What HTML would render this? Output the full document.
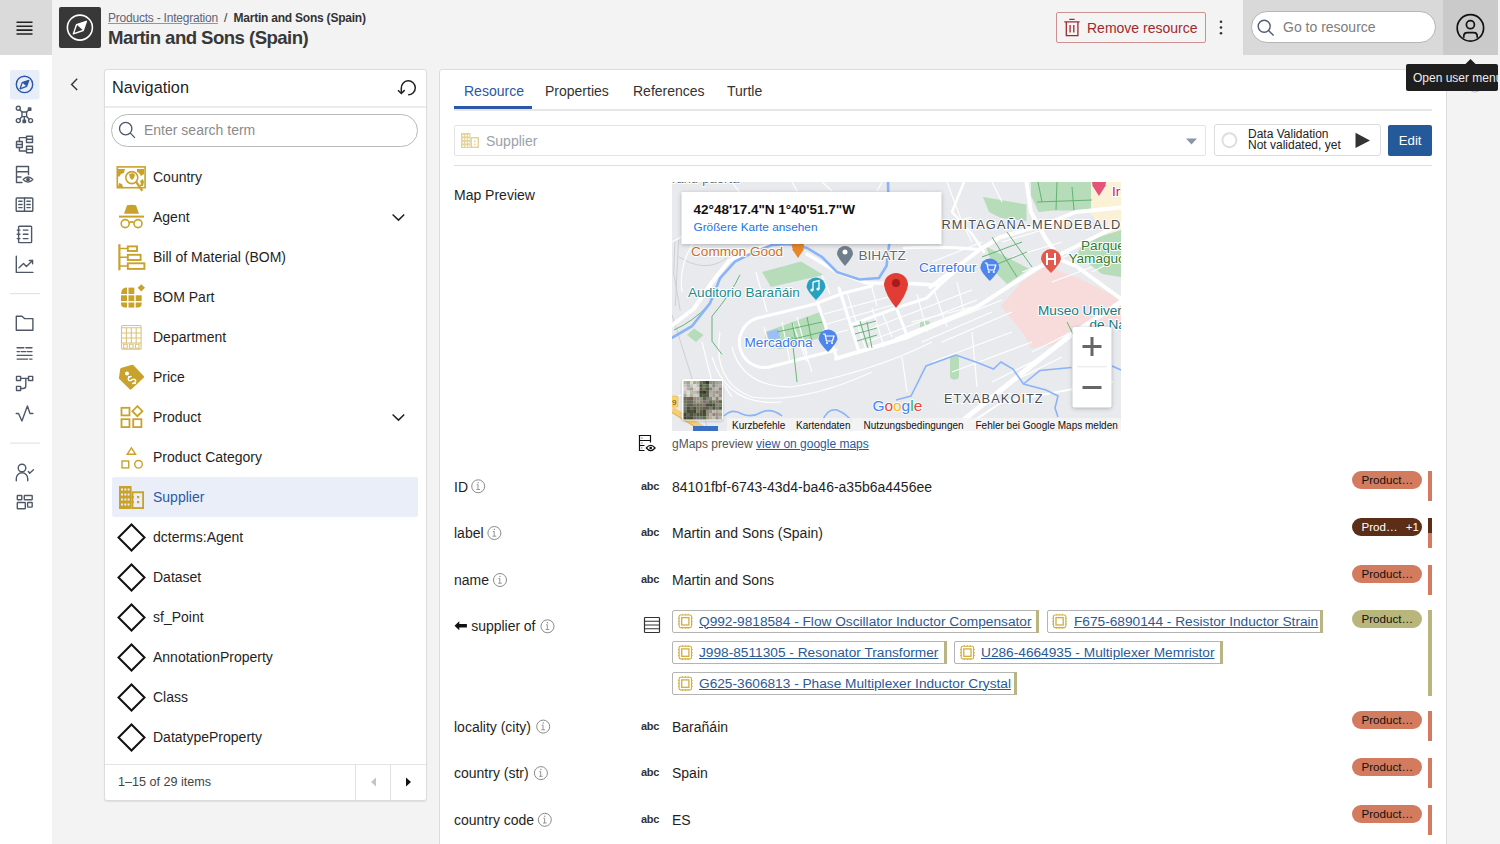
<!DOCTYPE html>
<html><head><meta charset="utf-8">
<style>
*{box-sizing:border-box;margin:0;padding:0}
html,body{width:1500px;height:844px;overflow:hidden;background:#f3f3f3;font-family:"Liberation Sans",sans-serif;color:#1f1f1f}
.a{position:absolute;white-space:nowrap}
svg{position:absolute;overflow:visible}
#side{left:0;top:0;width:52px;height:844px;background:#fff}
#ham{left:0;top:0;width:52px;height:55px;background:#dadada}
.sep{position:absolute;left:10px;width:30px;height:1px;background:#dfe2e6}
#logo{left:59px;top:7px;width:42px;height:41px;background:#383838;border-radius:2px}
.crumb{left:108px;top:10.5px;font-size:12px;color:#333;font-weight:bold;letter-spacing:-0.22px}
.crumb a{color:#5b6678;font-weight:normal;text-decoration:underline;text-decoration-color:#8d96a4}
.title{left:108px;top:26.5px;font-size:18.6px;font-weight:bold;color:#383838;letter-spacing:-0.55px}
#remove{left:1056px;top:12px;width:150px;height:31px;border:1px solid #cf9092;border-radius:2px;background:#f4f4f4}
#remove span{position:absolute;left:30px;top:7px;font-size:14px;color:#a3282c}
#srchbar{left:1243px;top:0;width:255px;height:55px;background:#d9d9d9}
#userbtn{left:1443px;top:0;width:55px;height:55px;background:#cacaca}
#gosearch{left:1251px;top:11px;width:185px;height:32px;border-radius:16px;background:#fff;border:1px solid #b5b5b5}
#navcard{left:104px;top:69px;width:323px;height:732px;background:#fff;border:1px solid #dcdcdc;border-radius:3px;box-shadow:0 1px 1px rgba(0,0,0,.08)}
#maincard{left:439px;top:69px;width:1008px;height:800px;background:#fff;border:1px solid #dcdcdc;border-radius:3px}
.nt{position:absolute;left:153px;font-size:14px;color:#1f1f1f}
.tip{left:1406px;top:64px;width:92px;height:27px;overflow:hidden;background:#1e1e1e;border-radius:2px;color:#ececec;font-size:12px}
.lbl{position:absolute;left:454px;font-size:14px;color:#1f1f1f}
.val{position:absolute;left:672px;font-size:14px;color:#1f1f1f}
.abc{position:absolute;left:641px;font-size:11px;font-weight:bold;color:#333;letter-spacing:-0.3px}
.pill{position:absolute;left:1352px;width:70px;height:18px;border-radius:9px;background:#d27b5f;font-size:11.6px;color:#111;padding-left:9.5px;line-height:18px}
.bar{position:absolute;left:1428.3px;width:3.4px;background:#d27b5f}
.chip{position:absolute;height:23px;border:1px solid #b4b4b4;border-radius:2px;background:#fff}
.chip::after{content:"";position:absolute;right:-1px;top:-1px;bottom:-1px;width:3px;background:#b9b583}
.chip span{position:absolute;left:26px;top:2.5px;font-size:13.7px;color:#2b5a97;text-decoration:underline}
.tab{position:absolute;top:83px;font-size:14px;color:#333}
</style></head><body>
<div id="side" class="a"></div>
<div id="ham" class="a"></div>
<div id="logo" class="a"></div>
<div class="a crumb"><a>Products - Integration</a><span style="font-weight:normal">&nbsp; / &nbsp;</span>Martin and Sons (Spain)</div>
<div class="a title">Martin and Sons (Spain)</div>
<div id="remove" class="a"><span>Remove resource</span></div>
<div id="srchbar" class="a"></div>
<div id="userbtn" class="a"></div>
<div id="gosearch" class="a"></div>
<div class="a" style="left:1283px;top:19px;font-size:14px;color:#7d7d7d">Go to resource</div>


<svg width="1500" height="844" style="left:0;top:0" viewBox="0 0 1500 844">
<!-- hamburger -->
<g stroke="#222" stroke-width="1.6"><path d="M16.5 22.3h16M16.5 26.2h16M16.5 30.1h16M16.5 34h16"/></g>
<!-- active nav bg -->
<rect x="10" y="70" width="29.5" height="29.5" rx="2" fill="#e8eef9"/>
<g fill="none" stroke="#2c56a8" stroke-width="1.4"><circle cx="24.5" cy="84.4" r="8.2"/></g>
<path d="M28.8 80.3 L22.2 82.6 L20.1 88.8 L26.6 86.4Z" fill="none" stroke="#2c56a8" stroke-width="1.3" stroke-linejoin="round"/>
<path d="M28.8 80.3 L22.2 82.6 L26.6 86.4Z" fill="#2c56a8"/>
<g fill="none" stroke="#4e5868" stroke-width="1.4" stroke-linecap="round" stroke-linejoin="round">
<!-- network -->
<rect x="22" y="112" width="4.6" height="4.6"/>
<circle cx="18.3" cy="108.3" r="2"/><circle cx="18.3" cy="120.6" r="2"/><circle cx="30.6" cy="120.6" r="2"/>
<path d="M19.8 109.8L22 112M26.6 112L28.6 110M22 116.6L19.8 119M26.6 116.6L29 119M24.3 116.6V120"/><rect x="28.4" y="108" width="2.4" height="2.4" fill="#4e5868"/><rect x="23.1" y="120.1" width="2.4" height="2.4" fill="#4e5868"/>
<!-- hierarchy -->
<rect x="16.5" y="141.5" width="5.8" height="6"/><rect x="26.5" y="136.2" width="6" height="6.3"/><rect x="26.5" y="146.3" width="6" height="6.4"/>
<path d="M19.4 141.5V137.6H26.5M19.4 147.5V151H26.5M16.5 144.5H22.3M26.5 139.3H32.5M26.5 149.4H32.5"/>
<!-- server eye -->
<path d="M22 182.5H16.5V166.5H28.5V174.5M16.5 171.8H28.5M16.5 177H21"/>
<path d="M23.2 179.6Q28 174.5 32.8 179.6Q28 184.7 23.2 179.6Z"/><circle cx="28" cy="179.6" r="1.2" fill="#4e5868"/>
<!-- book -->
<rect x="16.2" y="198" width="16.6" height="13.2" rx="0.8"/><path d="M24.5 198V211.2M18.8 201.3h3.3M18.8 204.5h3.3M18.8 207.6h3.3M26.9 201.3h3.3M26.9 204.5h3.3M26.9 207.6h3.3"/>
<!-- notebook -->
<rect x="18.6" y="226.3" width="13" height="16.3" rx="0.8"/><path d="M17.2 230.1h2.8M17.2 234.3h2.8M17.2 238.6h2.8M23.3 230.1h4.7M23.3 234.3h4.7M23.3 238.6h4.7"/>
<!-- chart -->
<path d="M16.3 256.2V272.4H32.9M19 267.7L23.5 263.5L26.4 266.6L32.6 260.5M29.3 260.5H32.6V263.8"/>
<!-- folder -->
<path d="M16.3 316.3H22L24.5 318.6H32.9V330.2H16.3Z"/>
<!-- lines -->
<path d="M17.1 347.8h6.7M25.9 347.8h6.1M17.1 351.6h2.4M21.2 351.6h4.6M27.4 351.6h4.6M17.1 355.4h14.9M17.1 359.1h10.6M29.7 359.1h2.3"/>
<!-- flow -->
<rect x="16.5" y="376.4" width="4.1" height="4.1"/><rect x="28.5" y="376.4" width="4.2" height="4.1"/><rect x="16.5" y="386.4" width="4.1" height="4.1"/>
<path d="M20.6 378.4H28.5M25.8 378.4V386Q25.8 388.5 23 388.5H20.6"/>
<!-- pulse -->
<path d="M16.2 413.5H18.5L21.9 421L27.4 406L30 413.5H32.9"/>
<!-- user check -->
<circle cx="22" cy="468" r="3.8"/><path d="M16.3 480.8V478.5A5.7 5.7 0 0 1 27.7 478.5V480.8M28.3 471.5L29.7 473.2L33.4 469.8"/>
<!-- grid -->
<rect x="17.3" y="495.5" width="4.5" height="4.3" rx="0.6"/><rect x="24.3" y="495.5" width="7.9" height="4.3" rx="0.6"/><rect x="17.3" y="502.5" width="8" height="6.3" rx="0.6"/><rect x="27.6" y="502.5" width="4.6" height="4.6" rx="0.6"/>
</g>
<rect x="10" y="293" width="30" height="1.2" fill="#e2e4e8"/>
<rect x="10" y="442.5" width="30" height="1.2" fill="#e2e4e8"/>
<!-- logo compass -->
<circle cx="79.9" cy="27.6" r="12.5" fill="none" stroke="#fff" stroke-width="1.6"/>
<path d="M86.4 21.3L76.6 24.6L73.3 33.9L83.2 30.5Z" fill="none" stroke="#fff" stroke-width="1.4" stroke-linejoin="round"/>
<path d="M86.4 21.3L76.6 24.6L83.2 30.5Z" fill="#fff"/>
</svg>

<!-- NAV CARD -->
<div id="navcard" class="a"></div>
<div class="a" style="left:112px;top:78px;font-size:16.3px;color:#1f1f1f">Navigation</div>
<div class="a" style="left:105px;top:106px;width:321px;height:2px;background:#ebebeb"></div>
<div class="a" style="left:111px;top:114px;width:307px;height:33px;border:1px solid #b9b9b9;border-radius:17px"></div>
<div class="a" style="left:144px;top:122px;font-size:14px;color:#8b8b8b">Enter search term</div>
<div class="a" style="left:112px;top:477px;width:306px;height:40px;background:#e9eef8;border-radius:2px"></div>
<div class="nt" style="top:169px">Country</div>
<div class="nt" style="top:209px">Agent</div>
<div class="nt" style="top:249px">Bill of Material (BOM)</div>
<div class="nt" style="top:289px">BOM Part</div>
<div class="nt" style="top:329px">Department</div>
<div class="nt" style="top:369px">Price</div>
<div class="nt" style="top:409px">Product</div>
<div class="nt" style="top:449px">Product Category</div>
<div class="nt" style="top:489px;color:#2c59a8">Supplier</div>
<div class="nt" style="top:529px">dcterms:Agent</div>
<div class="nt" style="top:569px">Dataset</div>
<div class="nt" style="top:609px">sf_Point</div>
<div class="nt" style="top:649px">AnnotationProperty</div>
<div class="nt" style="top:689px">Class</div>
<div class="nt" style="top:729px">DatatypeProperty</div>
<div class="a" style="left:105px;top:764px;width:321px;height:1px;background:#e3e3e3"></div>
<div class="a" style="left:355px;top:765px;width:1px;height:35px;background:#e0e0e0"></div>
<div class="a" style="left:390px;top:765px;width:1px;height:35px;background:#e0e0e0"></div>
<div class="a" style="left:118px;top:774.5px;font-size:12.6px;color:#444">1–15 of 29 items</div>


<svg width="1500" height="844" style="left:0;top:0" viewBox="0 0 1500 844">
<!-- back chevron -->
<path d="M77.2 78.7L71.6 84.4L77.2 89.9" fill="none" stroke="#333" stroke-width="1.4"/>
<!-- header trash -->
<g fill="none" stroke="#a3282c" stroke-width="1.3"><path d="M1069.3 19.3h5.3M1064.3 21.8h15.3M1066.3 21.8V35.7H1077.9V21.8M1070.1 25V32.4M1073.8 25V32.4"/></g>
<g fill="#333"><circle cx="1221" cy="21.7" r="1.3"/><circle cx="1221" cy="27.5" r="1.3"/><circle cx="1221" cy="33.3" r="1.3"/></g>
<!-- go search icon -->
<g fill="none" stroke="#4d5c78" stroke-width="1.4"><circle cx="1264.2" cy="26.2" r="6"/><path d="M1268.6 30.6L1273.6 35.5"/></g>
<!-- user -->
<g fill="none" stroke="#111" stroke-width="1.7"><circle cx="1470.4" cy="27.9" r="13.2"/><circle cx="1470.4" cy="24.7" r="4"/><path d="M1463.8 37.8V36.3Q1463.8 32.7 1467.4 32.7H1473.6Q1477.2 32.7 1477.2 36.3V37.8"/></g>
<!-- tooltip arrow + hidden circle -->
<path d="M1465 64.5L1470.5 59L1476 64.5Z" fill="#1e1e1e"/>
<circle cx="1475" cy="85" r="7" fill="none" stroke="#b8c2d2" stroke-width="1.2"/>

<!-- nav refresh -->
<g fill="none" stroke="#222" stroke-width="1.5"><path d="M408.2 94.8A7 7 0 1 0 401.3 88.3V93.2"/><path d="M398 90.2L401.35 93.5L404.7 90.1"/></g>
<!-- nav search -->
<g fill="none" stroke="#4a5568" stroke-width="1.3"><circle cx="125.7" cy="128.6" r="6.2"/><path d="M130.4 133.1L134.9 137.9"/></g>
<!-- chevrons -->
<g fill="none" stroke="#222" stroke-width="1.5"><path d="M392.6 214.5L398.5 220.1L404.2 214.5M392.6 414.5L398.5 420.1L404.2 414.5"/></g>
<!-- pagination -->
<path d="M376 777.5V786.5L371 782Z" fill="#c4c4c4"/>
<path d="M406 777.5V786.5L411 782Z" fill="#111"/>

<g fill="#c9a22c" stroke="none">
<!-- agent hat -->
<path d="M127 205.3Q131.5 204 136 205.3L139 213.8H124Z"/>
<rect x="119" y="215.6" width="25" height="2"/>
</g>
<g fill="none" stroke="#c9a22c" stroke-width="1.6">
<!-- country -->
<rect x="117.3" y="166.9" width="27.8" height="20.8"/>
<circle cx="131.8" cy="177.6" r="6"/><path d="M136.2 182L142.3 190.8" stroke-width="2.2"/>
<!-- agent glasses -->
<circle cx="125.2" cy="223.6" r="4"/><circle cx="138" cy="223.6" r="4"/><path d="M129.2 222.6Q131.6 221.2 134 222.6"/>
<!-- BOM -->
<path d="M119.4 244.2V270.3" stroke-width="2.2"/>
<path d="M119.4 248.5H127.8M119.4 257.2H127.8M119.4 266H127.8"/>
<rect x="127.8" y="246.4" width="9.2" height="4.6" stroke-width="1.9"/>
<rect x="127.8" y="254.8" width="12.8" height="5.2" stroke-width="1.9"/>
<rect x="127.8" y="263.3" width="16.6" height="5.6" stroke-width="1.9"/>
<!-- product -->
<rect x="121.5" y="407.8" width="8" height="7.6" stroke-width="1.8"/>
<path d="M137.4 406.2L142.4 411.2L137.4 416.2L132.4 411.2Z" stroke-width="1.8"/>
<rect x="121.5" y="419.2" width="8" height="7.9" stroke-width="1.8"/>
<rect x="133.2" y="419.2" width="8.2" height="7.9" stroke-width="1.8"/>
<!-- product category -->
<path d="M131.4 447.8L135.6 454.3H127.2Z" stroke-width="1.4"/>
<rect x="122" y="461" width="6.7" height="6.9" stroke-width="1.4"/>
<circle cx="138.5" cy="464.3" r="3.8" stroke-width="1.4"/>
</g>
<!-- country blobs -->
<g fill="#c9a22c"><path d="M118 169h7l-1 4-3 1-2 3-1-1zM137 169h7v5l-3 2-2-3-2-1zM129 174l4-1 2 2-1 3-2 2-2-2zM140 181l3-2 1 3-1 4h-4l2-2zM119 183l3 1 1 3h-5z"/></g>
<!-- BOM part -->
<g fill="#c9a22c">
<path d="M121 294.6Q121 287.6 126.5 287.6H127V294H121Z"/><rect x="128.5" y="287.6" width="5.8" height="6.4"/>
<rect x="121" y="295.3" width="6" height="5.8"/><rect x="128.5" y="295.3" width="5.8" height="5.8"/><rect x="135.7" y="295.3" width="6" height="5.8"/>
<path d="M121 302.5H127V307.6H125Q121 307.6 121 303.6Z"/><rect x="128.5" y="302.5" width="5.8" height="5.1"/><path d="M135.7 302.5H141.7V303.6Q141.7 307.6 137.7 307.6H135.7Z"/>
<path d="M141.3 284.2L145 287.8L141.3 291.5L137.6 287.8Z"/>
</g>
<!-- department -->
<g fill="none" stroke="#dcc47c" stroke-width="1.1">
<rect x="121.5" y="325.5" width="19.6" height="23.6" rx="1"/>
<path d="M121.5 327.8H141.1M121.5 333H141.1M121.5 338H141.1M121.5 343H141.1M126.4 327.8V343M131.3 327.8V343M136.2 327.8V343"/>
<rect x="123.6" y="344.2" width="3.6" height="4"/><rect x="129.5" y="344.2" width="3.6" height="4"/><rect x="135.4" y="344.2" width="3.6" height="4"/>
</g>
<!-- price -->
<path d="M121.5 369.3L132.3 366L142.8 376.8L130.6 388.4L120.2 378Z" fill="#c9a22c" stroke="#c9a22c" stroke-width="2.6" stroke-linejoin="round"/>
<circle cx="127" cy="373.4" r="2" fill="#fff"/>
<g transform="rotate(-45 132 380)"><path d="M134.2 377.2Q133 376 131.6 376Q129.6 376 129.6 377.8Q129.6 379.3 132 379.8Q134.4 380.3 134.4 382Q134.4 383.8 132.2 383.8Q130.6 383.8 129.6 382.6M132 374.8V376M132 383.8V385.2" fill="none" stroke="#fff" stroke-width="1.4"/></g>
<!-- supplier building -->
<g fill="#c9a22c"><rect x="119" y="486" width="12.6" height="23"/><rect x="131.6" y="491.3" width="12.4" height="17.7"/></g>
<g fill="#e9eef8">
<rect x="121" y="488.5" width="2" height="2"/><rect x="124.3" y="488.5" width="2" height="2"/><rect x="127.6" y="488.5" width="2" height="2"/>
<rect x="121" y="493.5" width="2" height="2"/><rect x="124.3" y="493.5" width="2" height="2"/><rect x="127.6" y="493.5" width="2" height="2"/>
<rect x="121" y="498.5" width="2" height="2"/><rect x="124.3" y="498.5" width="2" height="2"/><rect x="127.6" y="498.5" width="2" height="2"/>
<rect x="121" y="503.5" width="2" height="2"/><rect x="124.3" y="503.5" width="2" height="2"/><rect x="127.6" y="503.5" width="2" height="2"/>
<rect x="133.4" y="493.2" width="8.8" height="13.9"/>
</g>
<g fill="#c9a22c"><rect x="137" y="496" width="2.2" height="2.2"/><rect x="137" y="501" width="2.2" height="2.2"/><rect x="131.6" y="496" width="2.2" height="2.2"/><rect x="131.6" y="501" width="2.2" height="2.2"/></g>
<!-- diamonds -->
<g fill="none" stroke="#111" stroke-width="2">
<path d="M131.5 524.5L144.5 537.5L131.5 550.5L118.5 537.5Z"/>
<path d="M131.5 564.5L144.5 577.5L131.5 590.5L118.5 577.5Z"/>
<path d="M131.5 604.5L144.5 617.5L131.5 630.5L118.5 617.5Z"/>
<path d="M131.5 644.5L144.5 657.5L131.5 670.5L118.5 657.5Z"/>
<path d="M131.5 684.5L144.5 697.5L131.5 710.5L118.5 697.5Z"/>
<path d="M131.5 724.5L144.5 737.5L131.5 750.5L118.5 737.5Z"/>
</g>
</svg>

<!-- MAIN CARD -->
<div id="maincard" class="a"></div>
<div class="tab" style="left:464px;color:#2c56a8">Resource</div>
<div class="tab" style="left:545px">Properties</div>
<div class="tab" style="left:633px">References</div>
<div class="tab" style="left:727px">Turtle</div>
<div class="a" style="left:454px;top:109px;width:978px;height:2px;background:#e6e6e6"></div>
<div class="a" style="left:454px;top:106px;width:78px;height:3px;background:#2c56a8"></div>

<div class="a" style="left:454px;top:125px;width:752px;height:31px;border:1px solid #e4e4e4;border-radius:2px"></div>
<div class="a" style="left:486px;top:133px;font-size:14px;color:#9aa1ab">Supplier</div>
<div class="a" style="left:1214px;top:124px;width:167px;height:32px;border:1px solid #dcdcdc;border-radius:3px"></div>
<div class="a" style="left:1248px;top:128.8px;font-size:12px;line-height:11.6px;color:#222">Data Validation<br>Not validated, yet</div>
<div class="a" style="left:1388px;top:125px;width:44px;height:31px;background:#245a99;border-radius:2px"></div>
<div class="a" style="left:1398.8px;top:132.8px;font-size:13.2px;color:#fff">Edit</div>
<div class="a" style="left:454px;top:165px;width:978px;height:1px;background:#dedede"></div>

<div class="lbl" style="top:187px">Map Preview</div>
<div id="map" class="a" style="left:672px;top:182px;width:449px;height:249px;background:#e8eaed;overflow:hidden">
<svg width="449" height="249" viewBox="0 0 449 249" style="left:0;top:0;font-family:'Liberation Sans',sans-serif">
<!-- areas -->
<path d="M416 0H449V55L430 48L418 30Z" fill="#fbf1d7"/>
<path d="M374 84L408 97L449 117V124H401V145L381.5 163L359 166L353 154L329 124L350 100Z" fill="#f7dcdb"/>
<path d="M401 124H449V150L430 140L401 145Z" fill="#f7dcdb"/>
<path d="M311 15L354.5 22.5L354.5 39L329 36L317 30Z" fill="#b6dcb9"/>
<path d="M359 0H419V28.5L381.5 28.5L366.5 30L359 13.5Z" fill="#b6dcb9"/>
<path d="M412 60L449 48V95L430 92L405 72Z" fill="#b6dcb9"/>
<path d="M314 64.5L357.5 87L335 102L323 90Z" fill="#b6dcb9"/>
<path d="M90 90L129 79.5L151.5 93L99 105Z" fill="#b6dcb9"/>
<path d="M93.3 150L148 130L153.3 144.7L145.3 156.7L108 167.3L93.3 162Z" fill="#b6dcb9"/><path d="M95 150L106 147L108 156L97 158Z" fill="#9cbff7"/>
<path d="M15 153L22 146.5L31.5 153L24 160Z" fill="#b6dcb9"/>
<rect x="248" y="139" width="9.5" height="7.5" fill="#b6dcb9"/>
<rect x="278" y="173.5" width="9" height="24" rx="4" fill="#b6dcb9"/>
<!-- rail -->
<g fill="none" stroke="#c6c9cd" stroke-width="0.8"><path d="M3 58L1.7 91L8.3 129M6.6 58L3.3 124M0 132.6L36.5 249M6.6 74.6Q33 92 55 76"/></g>
<!-- minor roads -->
<g fill="none" stroke="#fff" stroke-width="1.2" opacity="0.95">
<path d="M0 60Q40 40 70 10M10 110Q5 70 40 40M60 0L75 20M120 0L125 9M150 0L160 9M210 0L205 9"/>
<path d="M84 90L95 130M150 93L158 112"/>
<path d="M48 150Q40 200 80 215Q130 222 200 190"/>
<path d="M181 130L195 170M200 126L212 165M120 140L135 180M130 160L140 190"/>
<path d="M230 20L260 10M240 50L300 35M260 80L310 60M275 0L290 40L300 60M320 0L330 20"/>
<path d="M330 60L390 42M340 75L390 60M350 90L400 72M380 100L420 85M420 90L449 75"/>
<path d="M240 140L300 125M250 160L320 130M260 180L340 150M280 190L360 160M320 200L380 170M230 175L235 210M300 150L305 205"/>
<path d="M360 170L400 150M340 200L390 175"/>
<path d="M0 215Q30 210 50 200L60 215M30 160L40 200"/>
</g>
<!-- major roads -->
<g fill="none" stroke="#fff" stroke-width="4" stroke-linecap="round" stroke-linejoin="round">
<path d="M0 143.5L21.6 127L40.5 99.5L57 79L74 70.3L99.5 62L128 60" stroke-width="4"/>
<path d="M232 66Q270 64 308 67.5" stroke-width="3"/>
<path d="M292 0L280 30L300 52L312 70" stroke-width="2.5"/>
<path d="M135 72L165 90L195 101L237 101.5L266.4 102.9" stroke-width="3.5"/>
<path d="M258.5 105L308 67.5L327.5 55.5L374 42L404 30L449 25.5"/>
<path d="M164 176.7L235.6 155L305 125L359 90L389 72L419 57L449 42"/>
<path d="M178.8 142.8L224 126L254.7 116.1L267.9 102.9L291.3 82.4" stroke-width="3"/>
<path d="M224 125L235.6 155" stroke-width="3"/>
<path d="M354.5 0L359 30L374 57L389 78L404 84L449 117"/>
<path d="M145.5 121L165 176.5M167 106L187 170" stroke-width="3"/>
<path d="M84 136.5L108 130.7L142.7 122L171.6 111L200 104" stroke-width="3"/>
<path d="M84 136.5A24.5 24.5 0 0 0 101.3 184L164 168" stroke-width="3"/>
<path d="M291.5 238L359 184L399.5 152.5L449 120" stroke-width="5"/>
<path d="M224 157L306.5 124" stroke-width="3"/>
<path d="M300 240L330 220L440 200" stroke-width="2"/>
</g>
<g fill="none" stroke="#fff" stroke-width="1.1">
<path d="M152 132L228 112M155 142L228 121M160 152L176 148M190 150L300 108M195 160L305 118M250 150L330 118M270 160L340 130"/>
<path d="M92 145L96 160M110 140L118 180M125 135L135 172M175 110L181 130M200 106L205 124M210 130L220 155M245 112L255 150M262 108L275 145M285 100L292 130"/>
<path d="M60 165Q70 205 120 205Q200 190 260 160M40 175Q55 225 110 220"/>
</g>
<!-- green paths -->
<g fill="none" stroke="#5aae6a" stroke-width="0.9">
<path d="M181.5 145L204 139M183 152L205 146M185 159L205 153M188 139L196 166M195 140L200 166"/>
<path d="M320 55L345 95M335 50L360 85M310 75L350 60M318 85L355 70"/>
<path d="M68 92.8Q60 110 40 134.3L40 159.2L50 172.4M120 155L125 200M70 10Q60 30 60 60M2 148Q20 140 37 123"/>
<path d="M105 150L150 140M110 160L150 150M120 140L125 165M135 135L140 160"/>
<path d="M366 0L370 20M385 0L384 28M400 5L402 28M365 20L420 18"/>
<path d="M395 140L405 160"/>
</g>
<!-- river -->
<g fill="none" stroke="#8ab4f8" stroke-width="2.6" stroke-linecap="round">
<path d="M0 155.8L19.9 144.2L38.1 121L48.1 96.1L63 79.6L82.9 69.6L100 63L117 62L135 66L150 75L165 90L187.5 97.5L207 96L214.5 84L216 72L217.5 60L216 0"/>
</g>
<g fill="none" stroke="#8ab4f8" stroke-width="1.6">
<path d="M224 218L239 214L254 184L284 173L306.5 181L321.5 187L329 180L341 187L351.5 202L374 208L386 214L383 226L386 235"/>
<path d="M351.5 202L368 188.5L399.5 185.5M440 184L449 188"/>
<path d="M52 234Q60 226 70 232Q80 236 90 230Q100 226 110 234M150 240Q155 226 165 228Q175 232 180 240"/>
</g>
<!-- labels -->
<g font-size="12.8" fill="#4a4d52" stroke="#fff" stroke-width="2" paint-order="stroke">
<text x="269.5" y="47.3" letter-spacing="1.1">RMITAGAÑA-MENDEBALD</text>
<text x="272" y="220.8" letter-spacing="1.05">ETXABAKOITZ</text>
<text x="0" y="1.2" letter-spacing="0.2" fill="#5f6b76">ranu paorta</text>
</g>
<g font-size="13.6" stroke="#fff" stroke-width="2" paint-order="stroke">
<text x="19" y="73.5" fill="#c96f26">Common Good</text>
<text x="186.5" y="78" fill="#5f6b76">BIHATZ</text>
<text x="16" y="115" fill="#1c8a8e">Auditorio Barañáin</text>
<text x="72.5" y="165.3" fill="#3b78e7">Mercadona</text>
<text x="247" y="90" fill="#3b78e7">Carrefour</text>
<text x="409" y="67.5" fill="#2e7d32">Parque</text>
<text x="396.5" y="81" fill="#2e7d32">Yamaguchi</text>
<text x="366" y="133" fill="#157a82">Museo Universidad</text>
<text x="417.5" y="146.5" fill="#157a82">de Navarra</text>
<text x="440" y="13.5" fill="#d0205e">Iru</text>
</g>
<!-- markers -->
<path d="M126 76L120 67H132Z" fill="#e8862a"/><circle cx="126" cy="64" r="6" fill="#e8862a"/>
<path d="M173 84Q166 76 165 72A8 8 0 1 1 181 72Q180 76 173 84Z" fill="#6f7e8c"/><circle cx="173" cy="70" r="2.5" fill="#fff"/>
<path d="M144 118Q136 110 134.5 105A9.5 9.5 0 1 1 153.5 105Q152 110 144 118Z" fill="#26a2c0"/>
<path d="M141 100L147 98.5V107M141 100V108" stroke="#fff" stroke-width="1.3" fill="none"/><circle cx="140" cy="108" r="1.6" fill="#fff"/><circle cx="146" cy="107" r="1.6" fill="#fff"/>
<path d="M156 170Q148 162 146.5 157A9.5 9.5 0 1 1 165.5 157Q164 162 156 170Z" fill="#4f86ec"/>
<path d="M151 152H153L154.5 159H160.5L162 154H153.5" stroke="#fff" stroke-width="1.2" fill="none"/><circle cx="155" cy="161" r="1" fill="#fff"/><circle cx="160" cy="161" r="1" fill="#fff"/>
<path d="M317.8 99Q309.8 91 308.3 86A9.5 9.5 0 1 1 327.3 86Q325.8 91 317.8 99Z" fill="#4f86ec"/>
<path d="M312.8 81H314.8L316.3 88H322.3L323.8 83H315.3" stroke="#fff" stroke-width="1.2" fill="none"/><circle cx="316.8" cy="90" r="1" fill="#fff"/><circle cx="321.8" cy="90" r="1" fill="#fff"/>
<path d="M379 91Q370 82 369 77A10 10 0 1 1 389 77Q388 82 379 91Z" fill="#e25a4c"/>
<path d="M375 71V83M383 71V83M375 77H383" stroke="#fff" stroke-width="2" fill="none"/>
<path d="M427 14L420 3H434Z" fill="#e4547a"/><circle cx="427" cy="0" r="7" fill="#e4547a"/>
<path d="M224 126Q213.5 113 212 103A12 12 0 1 1 236 103Q234.5 113 224 126Z" fill="#e23d35"/><circle cx="224" cy="101" r="4" fill="#a61b1b"/>
<!-- road signs -->
<rect x="-2" y="214" width="8" height="11" rx="1" fill="#f9d46b" stroke="#e0b14a" stroke-width="0.6"/><text x="0" y="223" font-size="8" fill="#5a4a10">9</text>
<path d="M0 227.5L34.5 249" stroke="#f5cd76" stroke-width="6"/>
<path d="M0 227.5L34.5 249" stroke="#e2a952" stroke-width="1" transform="translate(0,3)"/>
<rect x="21" y="244" width="25" height="8" fill="#3b6fc2"/>
<!-- satellite -->
<rect x="9.8" y="197" width="41.3" height="41.5" rx="3" fill="#fff" style="filter:drop-shadow(0 1px 1px rgba(0,0,0,.2))"/>
<svg x="11.5" y="199" width="38" height="37.5" style="position:static"><g transform="translate(-11.5,-199)"><g style="filter:blur(0.5px)"><rect x="11.5" y="199.0" width="3.3" height="3.3" fill="#b0b4a1"/><rect x="14.7" y="199.0" width="3.3" height="3.3" fill="#9fa391"/><rect x="17.9" y="199.0" width="3.3" height="3.3" fill="#e2d4c7"/><rect x="21.1" y="199.0" width="3.3" height="3.3" fill="#aaa693"/><rect x="24.3" y="199.0" width="3.3" height="3.3" fill="#a9b09c"/><rect x="27.5" y="199.0" width="3.3" height="3.3" fill="#616d4f"/><rect x="30.7" y="199.0" width="3.3" height="3.3" fill="#5a5745"/><rect x="33.9" y="199.0" width="3.3" height="3.3" fill="#303d29"/><rect x="37.1" y="199.0" width="3.3" height="3.3" fill="#8b8c7e"/><rect x="40.3" y="199.0" width="3.3" height="3.3" fill="#8b8b79"/><rect x="43.5" y="199.0" width="3.3" height="3.3" fill="#a49e99"/><rect x="46.7" y="199.0" width="3.3" height="3.3" fill="#aba39d"/><rect x="11.5" y="202.2" width="3.3" height="3.3" fill="#cbc4ba"/><rect x="14.7" y="202.2" width="3.3" height="3.3" fill="#acaa9d"/><rect x="17.9" y="202.2" width="3.3" height="3.3" fill="#c5c8bf"/><rect x="21.1" y="202.2" width="3.3" height="3.3" fill="#dadacd"/><rect x="24.3" y="202.2" width="3.3" height="3.3" fill="#c0bdc2"/><rect x="27.5" y="202.2" width="3.3" height="3.3" fill="#495638"/><rect x="30.7" y="202.2" width="3.3" height="3.3" fill="#747a56"/><rect x="33.9" y="202.2" width="3.3" height="3.3" fill="#56664e"/><rect x="37.1" y="202.2" width="3.3" height="3.3" fill="#b6b5aa"/><rect x="40.3" y="202.2" width="3.3" height="3.3" fill="#858683"/><rect x="43.5" y="202.2" width="3.3" height="3.3" fill="#ada7a5"/><rect x="46.7" y="202.2" width="3.3" height="3.3" fill="#b6aca5"/><rect x="11.5" y="205.4" width="3.3" height="3.3" fill="#dbccd2"/><rect x="14.7" y="205.4" width="3.3" height="3.3" fill="#b3adb1"/><rect x="17.9" y="205.4" width="3.3" height="3.3" fill="#a1a093"/><rect x="21.1" y="205.4" width="3.3" height="3.3" fill="#cecfc7"/><rect x="24.3" y="205.4" width="3.3" height="3.3" fill="#e1d0cb"/><rect x="27.5" y="205.4" width="3.3" height="3.3" fill="#52563a"/><rect x="30.7" y="205.4" width="3.3" height="3.3" fill="#6b6e5b"/><rect x="33.9" y="205.4" width="3.3" height="3.3" fill="#4c4f34"/><rect x="37.1" y="205.4" width="3.3" height="3.3" fill="#89837c"/><rect x="40.3" y="205.4" width="3.3" height="3.3" fill="#b0a4a9"/><rect x="43.5" y="205.4" width="3.3" height="3.3" fill="#b9b7ae"/><rect x="46.7" y="205.4" width="3.3" height="3.3" fill="#83877b"/><rect x="11.5" y="208.6" width="3.3" height="3.3" fill="#c9bfc3"/><rect x="14.7" y="208.6" width="3.3" height="3.3" fill="#d5ded4"/><rect x="17.9" y="208.6" width="3.3" height="3.3" fill="#bdb9a8"/><rect x="21.1" y="208.6" width="3.3" height="3.3" fill="#c2b3b0"/><rect x="24.3" y="208.6" width="3.3" height="3.3" fill="#a2a695"/><rect x="27.5" y="208.6" width="3.3" height="3.3" fill="#3b3a24"/><rect x="30.7" y="208.6" width="3.3" height="3.3" fill="#2e3525"/><rect x="33.9" y="208.6" width="3.3" height="3.3" fill="#515b47"/><rect x="37.1" y="208.6" width="3.3" height="3.3" fill="#b2a59f"/><rect x="40.3" y="208.6" width="3.3" height="3.3" fill="#a09f89"/><rect x="43.5" y="208.6" width="3.3" height="3.3" fill="#958f86"/><rect x="46.7" y="208.6" width="3.3" height="3.3" fill="#a69a92"/><rect x="11.5" y="211.8" width="3.3" height="3.3" fill="#a8a2a1"/><rect x="14.7" y="211.8" width="3.3" height="3.3" fill="#d2d9c1"/><rect x="17.9" y="211.8" width="3.3" height="3.3" fill="#b5ac9d"/><rect x="21.1" y="211.8" width="3.3" height="3.3" fill="#c4d0c1"/><rect x="24.3" y="211.8" width="3.3" height="3.3" fill="#c3c5c5"/><rect x="27.5" y="211.8" width="3.3" height="3.3" fill="#465438"/><rect x="30.7" y="211.8" width="3.3" height="3.3" fill="#5c5e43"/><rect x="33.9" y="211.8" width="3.3" height="3.3" fill="#57604d"/><rect x="37.1" y="211.8" width="3.3" height="3.3" fill="#b5afaf"/><rect x="40.3" y="211.8" width="3.3" height="3.3" fill="#a9998f"/><rect x="43.5" y="211.8" width="3.3" height="3.3" fill="#b9bbaa"/><rect x="46.7" y="211.8" width="3.3" height="3.3" fill="#969487"/><rect x="11.5" y="215.0" width="3.3" height="3.3" fill="#6b6e58"/><rect x="14.7" y="215.0" width="3.3" height="3.3" fill="#6f6456"/><rect x="17.9" y="215.0" width="3.3" height="3.3" fill="#6e5d5a"/><rect x="21.1" y="215.0" width="3.3" height="3.3" fill="#978c7b"/><rect x="24.3" y="215.0" width="3.3" height="3.3" fill="#989087"/><rect x="27.5" y="215.0" width="3.3" height="3.3" fill="#8f9580"/><rect x="30.7" y="215.0" width="3.3" height="3.3" fill="#63634f"/><rect x="33.9" y="215.0" width="3.3" height="3.3" fill="#838472"/><rect x="37.1" y="215.0" width="3.3" height="3.3" fill="#878686"/><rect x="40.3" y="215.0" width="3.3" height="3.3" fill="#b6bcae"/><rect x="43.5" y="215.0" width="3.3" height="3.3" fill="#8c8379"/><rect x="46.7" y="215.0" width="3.3" height="3.3" fill="#b5bda7"/><rect x="11.5" y="218.2" width="3.3" height="3.3" fill="#737159"/><rect x="14.7" y="218.2" width="3.3" height="3.3" fill="#68695e"/><rect x="17.9" y="218.2" width="3.3" height="3.3" fill="#6b675a"/><rect x="21.1" y="218.2" width="3.3" height="3.3" fill="#8b867e"/><rect x="24.3" y="218.2" width="3.3" height="3.3" fill="#999984"/><rect x="27.5" y="218.2" width="3.3" height="3.3" fill="#968876"/><rect x="30.7" y="218.2" width="3.3" height="3.3" fill="#83716d"/><rect x="33.9" y="218.2" width="3.3" height="3.3" fill="#888173"/><rect x="37.1" y="218.2" width="3.3" height="3.3" fill="#616a4c"/><rect x="40.3" y="218.2" width="3.3" height="3.3" fill="#767d71"/><rect x="43.5" y="218.2" width="3.3" height="3.3" fill="#827460"/><rect x="46.7" y="218.2" width="3.3" height="3.3" fill="#67674e"/><rect x="11.5" y="221.4" width="3.3" height="3.3" fill="#6d7d67"/><rect x="14.7" y="221.4" width="3.3" height="3.3" fill="#5c6159"/><rect x="17.9" y="221.4" width="3.3" height="3.3" fill="#5d6042"/><rect x="21.1" y="221.4" width="3.3" height="3.3" fill="#6d7664"/><rect x="24.3" y="221.4" width="3.3" height="3.3" fill="#6a6e51"/><rect x="27.5" y="221.4" width="3.3" height="3.3" fill="#75705a"/><rect x="30.7" y="221.4" width="3.3" height="3.3" fill="#7c756a"/><rect x="33.9" y="221.4" width="3.3" height="3.3" fill="#4c5139"/><rect x="37.1" y="221.4" width="3.3" height="3.3" fill="#444d2e"/><rect x="40.3" y="221.4" width="3.3" height="3.3" fill="#4f4c39"/><rect x="43.5" y="221.4" width="3.3" height="3.3" fill="#807c6c"/><rect x="46.7" y="221.4" width="3.3" height="3.3" fill="#758267"/><rect x="11.5" y="224.6" width="3.3" height="3.3" fill="#6b7766"/><rect x="14.7" y="224.6" width="3.3" height="3.3" fill="#4a4b3f"/><rect x="17.9" y="224.6" width="3.3" height="3.3" fill="#656655"/><rect x="21.1" y="224.6" width="3.3" height="3.3" fill="#505236"/><rect x="24.3" y="224.6" width="3.3" height="3.3" fill="#726a60"/><rect x="27.5" y="224.6" width="3.3" height="3.3" fill="#6a6d4b"/><rect x="30.7" y="224.6" width="3.3" height="3.3" fill="#5b6449"/><rect x="33.9" y="224.6" width="3.3" height="3.3" fill="#5b5f4f"/><rect x="37.1" y="224.6" width="3.3" height="3.3" fill="#747668"/><rect x="40.3" y="224.6" width="3.3" height="3.3" fill="#4b5241"/><rect x="43.5" y="224.6" width="3.3" height="3.3" fill="#6d7960"/><rect x="46.7" y="224.6" width="3.3" height="3.3" fill="#566550"/><rect x="11.5" y="227.8" width="3.3" height="3.3" fill="#6f6a5c"/><rect x="14.7" y="227.8" width="3.3" height="3.3" fill="#414c2d"/><rect x="17.9" y="227.8" width="3.3" height="3.3" fill="#4a4f41"/><rect x="21.1" y="227.8" width="3.3" height="3.3" fill="#454335"/><rect x="24.3" y="227.8" width="3.3" height="3.3" fill="#73815f"/><rect x="27.5" y="227.8" width="3.3" height="3.3" fill="#5b5941"/><rect x="30.7" y="227.8" width="3.3" height="3.3" fill="#4b452d"/><rect x="33.9" y="227.8" width="3.3" height="3.3" fill="#968a7f"/><rect x="37.1" y="227.8" width="3.3" height="3.3" fill="#99948c"/><rect x="40.3" y="227.8" width="3.3" height="3.3" fill="#bab8ae"/><rect x="43.5" y="227.8" width="3.3" height="3.3" fill="#a9a79b"/><rect x="46.7" y="227.8" width="3.3" height="3.3" fill="#b7baa4"/><rect x="11.5" y="231.0" width="3.3" height="3.3" fill="#394c2e"/><rect x="14.7" y="231.0" width="3.3" height="3.3" fill="#686356"/><rect x="17.9" y="231.0" width="3.3" height="3.3" fill="#4c513a"/><rect x="21.1" y="231.0" width="3.3" height="3.3" fill="#62624f"/><rect x="24.3" y="231.0" width="3.3" height="3.3" fill="#545549"/><rect x="27.5" y="231.0" width="3.3" height="3.3" fill="#50563e"/><rect x="30.7" y="231.0" width="3.3" height="3.3" fill="#454d31"/><rect x="33.9" y="231.0" width="3.3" height="3.3" fill="#898e83"/><rect x="37.1" y="231.0" width="3.3" height="3.3" fill="#b7b0a3"/><rect x="40.3" y="231.0" width="3.3" height="3.3" fill="#948677"/><rect x="43.5" y="231.0" width="3.3" height="3.3" fill="#a39089"/><rect x="46.7" y="231.0" width="3.3" height="3.3" fill="#a5a08e"/><rect x="11.5" y="234.2" width="3.3" height="3.3" fill="#444435"/><rect x="14.7" y="234.2" width="3.3" height="3.3" fill="#44513f"/><rect x="17.9" y="234.2" width="3.3" height="3.3" fill="#4d493d"/><rect x="21.1" y="234.2" width="3.3" height="3.3" fill="#686c61"/><rect x="24.3" y="234.2" width="3.3" height="3.3" fill="#6a6f61"/><rect x="27.5" y="234.2" width="3.3" height="3.3" fill="#6f7468"/><rect x="30.7" y="234.2" width="3.3" height="3.3" fill="#5f6d4d"/><rect x="33.9" y="234.2" width="3.3" height="3.3" fill="#a09985"/><rect x="37.1" y="234.2" width="3.3" height="3.3" fill="#b9a8a1"/><rect x="40.3" y="234.2" width="3.3" height="3.3" fill="#bebea4"/><rect x="43.5" y="234.2" width="3.3" height="3.3" fill="#9a9292"/><rect x="46.7" y="234.2" width="3.3" height="3.3" fill="#b9b79c"/></g></g></svg>
<!-- google logo -->
<g font-size="15.5" stroke="#fff" stroke-width="1.5" paint-order="stroke"><text x="200.5" y="228.5" fill="#4285f4">G</text><text x="212.5" y="228.5" fill="#ea4335">o</text><text x="221" y="228.5" fill="#fbbc05">o</text><text x="229.5" y="228.5" fill="#4285f4">g</text><text x="238.3" y="228.5" fill="#34a853">l</text><text x="241.8" y="228.5" fill="#ea4335">e</text></g>
<!-- attribution -->
<rect x="55" y="236" width="394" height="13" fill="#f5f5f5" opacity="0.85"/>
<g font-size="10" fill="#111"><text x="60" y="246.5">Kurzbefehle</text><text x="124" y="246.5">Kartendaten</text><text x="191.5" y="246.5">Nutzungsbedingungen</text><text x="303.5" y="246.5">Fehler bei Google Maps melden</text></g>
<!-- popup -->
<rect x="9.5" y="10" width="260" height="52" fill="#fff" style="filter:drop-shadow(0 1px 2px rgba(0,0,0,.25))"/>
<text x="21.5" y="32" font-size="13.5" font-weight="bold" fill="#111">42°48'17.4"N 1°40'51.7"W</text>
<text x="21.5" y="49.3" font-size="11.8" fill="#1a73e8">Größere Karte ansehen</text>
<!-- zoom control -->
<rect x="400.5" y="145" width="39" height="80.5" rx="2" fill="#fff" style="filter:drop-shadow(0 1px 2px rgba(0,0,0,.25))"/>
<path d="M410.5 164.5H429.5M420 155V174M410.5 205.5H429.5" stroke="#666" stroke-width="3"/>
<path d="M405 184.8H435" stroke="#e6e6e6" stroke-width="1"/>
</svg>
</div>
<div class="a" style="left:672px;top:437px;font-size:12px;color:#555">gMaps preview <span style="color:#2a5a9a;text-decoration:underline">view on google maps</span></div>

<div class="lbl" style="top:479px">ID</div>
<div class="abc" style="top:480px">abc</div>
<div class="val" style="top:479px">84101fbf-6743-43d4-ba46-a35b6a4456ee</div>
<div class="lbl" style="top:525px">label</div>
<div class="abc" style="top:526px">abc</div>
<div class="val" style="top:525px">Martin and Sons (Spain)</div>
<div class="lbl" style="top:572px">name</div>
<div class="abc" style="top:573px">abc</div>
<div class="val" style="top:572px">Martin and Sons</div>
<div class="lbl" style="top:618px;left:471.3px;letter-spacing:-0.04px">supplier of</div>
<div class="lbl" style="top:719px">locality (city)</div>
<div class="abc" style="top:720px">abc</div>
<div class="val" style="top:719px">Barañáin</div>
<div class="lbl" style="top:765px">country (str)</div>
<div class="abc" style="top:766px">abc</div>
<div class="val" style="top:765px">Spain</div>
<div class="lbl" style="top:812px">country code</div>
<div class="abc" style="top:813px">abc</div>
<div class="val" style="top:812px">ES</div>

<div class="chip" style="left:672px;top:610px;width:367px"><span>Q992-9818584 - Flow Oscillator Inductor Compensator</span></div>
<div class="chip" style="left:1047px;top:610px;width:276px"><span>F675-6890144 - Resistor Inductor Strain</span></div>
<div class="chip" style="left:672px;top:641px;width:275px"><span>J998-8511305 - Resonator Transformer</span></div>
<div class="chip" style="left:954px;top:641px;width:269px"><span>U286-4664935 - Multiplexer Memristor</span></div>
<div class="chip" style="left:672px;top:672px;width:345px"><span>G625-3606813 - Phase Multiplexer Inductor Crystal</span></div>

<div class="pill" style="top:471px">Product…</div><div class="bar" style="top:471px;height:30px"></div>
<div class="pill" style="top:518px;background:#5c2d17;color:#fff">Prod… <span style="margin-left:5px">+1</span></div><div class="bar" style="top:518px;height:15px;background:#5c2d17"></div><div class="bar" style="top:533px;height:15px"></div>
<div class="pill" style="top:565px">Product…</div><div class="bar" style="top:565px;height:30px"></div>
<div class="pill" style="top:610px;background:#b8b67c">Product…</div><div class="bar" style="top:610px;height:86px;background:#b8b67c"></div>
<div class="pill" style="top:711px">Product…</div><div class="bar" style="top:711px;height:30px"></div>
<div class="pill" style="top:758px">Product…</div><div class="bar" style="top:758px;height:30px"></div>
<div class="pill" style="top:805px">Product…</div><div class="bar" style="top:805px;height:30px"></div>

<svg width="1500" height="844" style="left:0;top:0" viewBox="0 0 1500 844">
<g fill="#e6d39a"><rect x="461" y="133" width="9.5" height="15"/><rect x="470.5" y="137" width="8.5" height="11"/></g>
<g fill="#fff"><rect x="462.5" y="134.8" width="1.6" height="1.6"/><rect x="465.3" y="134.8" width="1.6" height="1.6"/><rect x="468" y="134.8" width="1.6" height="1.6"/><rect x="462.5" y="138.3" width="1.6" height="1.6"/><rect x="465.3" y="138.3" width="1.6" height="1.6"/><rect x="468" y="138.3" width="1.6" height="1.6"/><rect x="462.5" y="141.8" width="1.6" height="1.6"/><rect x="465.3" y="141.8" width="1.6" height="1.6"/><rect x="468" y="141.8" width="1.6" height="1.6"/><rect x="462.5" y="145.3" width="1.6" height="1.6"/><rect x="465.3" y="145.3" width="1.6" height="1.6"/><rect x="468" y="145.3" width="1.6" height="1.6"/><rect x="472" y="138.5" width="5.5" height="8"/></g>
<g fill="#e6d39a"><rect x="474" y="140.5" width="1.6" height="1.6"/><rect x="474" y="143.5" width="1.6" height="1.6"/></g>
<path d="M1186 138.5H1197L1191.5 144.5Z" fill="#8c95a6"/>
<circle cx="1229.4" cy="140.2" r="7" fill="none" stroke="#dedede" stroke-width="2"/>
<path d="M1355.5 132.8V148L1370 140.4Z" fill="#333"/>
<!-- map eye icon -->
<g fill="none" stroke="#111" stroke-width="1.2"><path d="M644.5 450.5H639.5V435.5H650.5V442.5M639.5 440.5H650.5M639.5 445.5H644.5"/><path d="M646.3 448Q650.7 442.8 655.1 448Q650.7 453.2 646.3 448Z"/></g><circle cx="650.7" cy="448" r="1.3" fill="#111"/>
<g fill="#999"><rect x="641.2" y="437.4" width="1.4" height="1.4"/><rect x="641.2" y="442.3" width="1.4" height="1.4"/><rect x="641.2" y="447.2" width="1.4" height="1.4"/></g>
<!-- supplier of arrow -->
<path d="M454.5 625.7L459.3 621.2V624H466.9V627.6H459.3V630.3Z" fill="#111"/>
<!-- list icon -->
<rect x="644.5" y="617.5" width="15" height="15" rx="0.8" fill="none" stroke="#333" stroke-width="1.2"/>
<path d="M644.5 621.3H659.5M644.5 625H659.5M644.5 628.7H659.5" stroke="#333" stroke-width="1.1"/>
<circle cx="478.2" cy="486.3" r="6.5" fill="none" stroke="#8a8a8a" stroke-width="1"/><path d="M478.0 484.8V489.5M476.4 489.5H480.0M476.7 484.8H478.2" fill="none" stroke="#8a8a8a" stroke-width="0.9"/><circle cx="478.2" cy="482.7" r="0.7" fill="#8a8a8a"/><circle cx="494.4" cy="533" r="6.5" fill="none" stroke="#8a8a8a" stroke-width="1"/><path d="M494.2 531.5V536.2M492.59999999999997 536.2H496.2M492.9 531.5H494.4" fill="none" stroke="#8a8a8a" stroke-width="0.9"/><circle cx="494.4" cy="529.4" r="0.7" fill="#8a8a8a"/><circle cx="500" cy="580" r="6.5" fill="none" stroke="#8a8a8a" stroke-width="1"/><path d="M499.8 578.5V583.2M498.2 583.2H501.8M498.5 578.5H500" fill="none" stroke="#8a8a8a" stroke-width="0.9"/><circle cx="500" cy="576.4" r="0.7" fill="#8a8a8a"/><circle cx="547.5" cy="626.3" r="6.5" fill="none" stroke="#8a8a8a" stroke-width="1"/><path d="M547.3 624.8V629.5M545.7 629.5H549.3M546.0 624.8H547.5" fill="none" stroke="#8a8a8a" stroke-width="0.9"/><circle cx="547.5" cy="622.6999999999999" r="0.7" fill="#8a8a8a"/><circle cx="543.2" cy="726.6" r="6.5" fill="none" stroke="#8a8a8a" stroke-width="1"/><path d="M543.0 725.1V729.8000000000001M541.4000000000001 729.8000000000001H545.0M541.7 725.1H543.2" fill="none" stroke="#8a8a8a" stroke-width="0.9"/><circle cx="543.2" cy="723.0" r="0.7" fill="#8a8a8a"/><circle cx="540.9" cy="773.1" r="6.5" fill="none" stroke="#8a8a8a" stroke-width="1"/><path d="M540.6999999999999 771.6V776.3000000000001M539.1 776.3000000000001H542.6999999999999M539.4 771.6H540.9" fill="none" stroke="#8a8a8a" stroke-width="0.9"/><circle cx="540.9" cy="769.5" r="0.7" fill="#8a8a8a"/><circle cx="544.8" cy="819.8" r="6.5" fill="none" stroke="#8a8a8a" stroke-width="1"/><path d="M544.5999999999999 818.3V823.0M543.0 823.0H546.5999999999999M543.3 818.3H544.8" fill="none" stroke="#8a8a8a" stroke-width="0.9"/><circle cx="544.8" cy="816.1999999999999" r="0.7" fill="#8a8a8a"/><rect x="679.1" y="615" width="12.4" height="12.6" rx="1.5" fill="none" stroke="#d2ad3c" stroke-width="1.1"/><rect x="681.7" y="617.6" width="7.2" height="7.4" fill="none" stroke="#d2ad3c" stroke-width="1.3"/><path d="M682.4 613.8V615M682.4 627.6V628.8M677.9 618.3H679.1M691.5 618.3H692.7M685.4 613.8V615M685.4 627.6V628.8M677.9 621.3H679.1M691.5 621.3H692.7M688.1 613.8V615M688.1 627.6V628.8M677.9 624.0H679.1M691.5 624.0H692.7" stroke="#d2ad3c" stroke-width="1"/><rect x="1053.4" y="615" width="12.4" height="12.6" rx="1.5" fill="none" stroke="#d2ad3c" stroke-width="1.1"/><rect x="1056.0" y="617.6" width="7.2" height="7.4" fill="none" stroke="#d2ad3c" stroke-width="1.3"/><path d="M1056.7 613.8V615M1056.7 627.6V628.8M1052.2 618.3H1053.4M1065.8000000000002 618.3H1067.0M1059.7 613.8V615M1059.7 627.6V628.8M1052.2 621.3H1053.4M1065.8000000000002 621.3H1067.0M1062.4 613.8V615M1062.4 627.6V628.8M1052.2 624.0H1053.4M1065.8000000000002 624.0H1067.0" stroke="#d2ad3c" stroke-width="1"/><rect x="679.1" y="646.3" width="12.4" height="12.6" rx="1.5" fill="none" stroke="#d2ad3c" stroke-width="1.1"/><rect x="681.7" y="648.9" width="7.2" height="7.4" fill="none" stroke="#d2ad3c" stroke-width="1.3"/><path d="M682.4 645.0999999999999V646.3M682.4 658.9V660.0999999999999M677.9 649.5999999999999H679.1M691.5 649.5999999999999H692.7M685.4 645.0999999999999V646.3M685.4 658.9V660.0999999999999M677.9 652.5999999999999H679.1M691.5 652.5999999999999H692.7M688.1 645.0999999999999V646.3M688.1 658.9V660.0999999999999M677.9 655.3H679.1M691.5 655.3H692.7" stroke="#d2ad3c" stroke-width="1"/><rect x="961.2" y="646.3" width="12.4" height="12.6" rx="1.5" fill="none" stroke="#d2ad3c" stroke-width="1.1"/><rect x="963.8000000000001" y="648.9" width="7.2" height="7.4" fill="none" stroke="#d2ad3c" stroke-width="1.3"/><path d="M964.5 645.0999999999999V646.3M964.5 658.9V660.0999999999999M960.0 649.5999999999999H961.2M973.6 649.5999999999999H974.8000000000001M967.5 645.0999999999999V646.3M967.5 658.9V660.0999999999999M960.0 652.5999999999999H961.2M973.6 652.5999999999999H974.8000000000001M970.2 645.0999999999999V646.3M970.2 658.9V660.0999999999999M960.0 655.3H961.2M973.6 655.3H974.8000000000001" stroke="#d2ad3c" stroke-width="1"/><rect x="679.1" y="677.3" width="12.4" height="12.6" rx="1.5" fill="none" stroke="#d2ad3c" stroke-width="1.1"/><rect x="681.7" y="679.9" width="7.2" height="7.4" fill="none" stroke="#d2ad3c" stroke-width="1.3"/><path d="M682.4 676.0999999999999V677.3M682.4 689.9V691.0999999999999M677.9 680.5999999999999H679.1M691.5 680.5999999999999H692.7M685.4 676.0999999999999V677.3M685.4 689.9V691.0999999999999M677.9 683.5999999999999H679.1M691.5 683.5999999999999H692.7M688.1 676.0999999999999V677.3M688.1 689.9V691.0999999999999M677.9 686.3H679.1M691.5 686.3H692.7" stroke="#d2ad3c" stroke-width="1"/>
</svg>
<div class="a tip"><span style="position:absolute;left:7px;top:7px">Open user menu</span></div>
</body></html>
